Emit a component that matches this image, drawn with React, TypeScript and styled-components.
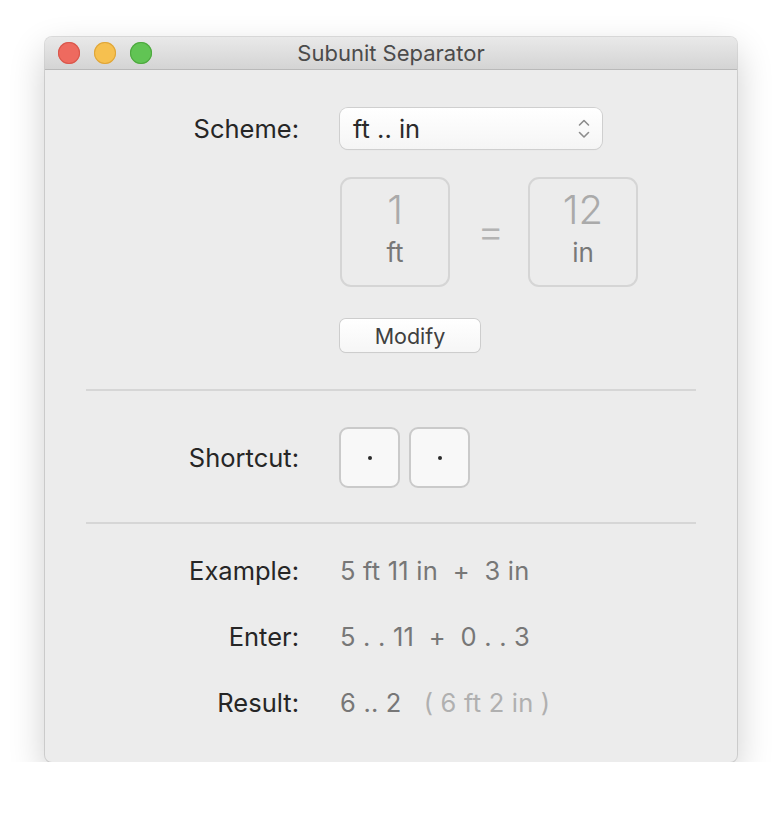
import React from 'react'
import styled, { createGlobalStyle } from 'styled-components'

const GlobalStyle = createGlobalStyle`
  html, body {
    margin: 0;
    padding: 0;
    background: #ffffff;
  }

  body {
    font-family: Inter, 'Noto Sans', 'Liberation Sans', sans-serif;
    -webkit-font-smoothing: antialiased;
  }
`

const Window = styled.div`
  width: 692px;
  margin: 37px 0 0 45px;
  border-radius: 7px;
  overflow: hidden;
  background: #ececec;
  box-shadow: 0 0 0 1px rgba(0, 0, 0, 0.12), 0 14px 36px rgba(0, 0, 0, 0.2);
`

const TitleBar = styled.div`
  position: relative;
  height: 32px;
  display: flex;
  align-items: center;
  justify-content: center;
  background: linear-gradient(#e9e9e9, #d4d4d4);
  border-bottom: 1px solid #b9b9b9;

  h1 {
    margin: 0;
    font-size: 22px;
    font-weight: 400;
    line-height: 28px;
    color: #4b4b4b;
  }
`

const Lights = styled.div`
  position: absolute;
  left: 13px;
  top: 5px;
  display: flex;
  gap: 14px;
`

const Light = styled.span<{ $fill: string; $edge: string }>`
  width: 22px;
  height: 22px;
  border-radius: 50%;
  background: ${p => p.$fill};
  box-shadow: inset 0 0 0 1px ${p => p.$edge};
`

const Content = styled.div`
  padding: 38px 41px 44px;
`

const Row = styled.div<{ $top?: number }>`
  display: grid;
  grid-template-columns: 213px 1fr;
  column-gap: 41px;
  align-items: center;
  margin-top: ${p => p.$top ?? 0}px;
`

const Label = styled.span`
  text-align: right;
  font-size: 25.5px;
  line-height: 30px;
  color: #262626;
`

const Popup = styled.div`
  width: 262px;
  height: 41px;
  box-sizing: border-box;
  padding: 0 12px 0 13px;
  display: flex;
  align-items: center;
  justify-content: space-between;
  border-radius: 8px;
  background: linear-gradient(#ffffff, #f5f5f5);
  box-shadow: 0 0 0 1px #cfcfcf, 0 1px 1px rgba(0, 0, 0, 0.12);
  font-size: 25.5px;
  color: #2b2b2b;
`

const Ratio = styled.div`
  display: flex;
  align-items: center;
  gap: 27px;
`

const UnitBox = styled.div`
  width: 110px;
  height: 110px;
  box-sizing: border-box;
  border: 2px solid #d5d5d5;
  border-radius: 11px;
  display: flex;
  flex-direction: column;
  align-items: center;
  justify-content: center;
  padding-bottom: 6px;

  strong {
    font-size: 40px;
    font-weight: 300;
    line-height: 42px;
    color: #aaaaaa;
  }

  span {
    margin-top: 6px;
    font-size: 26px;
    line-height: 32px;
    color: #787878;
  }
`

const Equals = styled.span`
  font-size: 42px;
  font-weight: 300;
  color: #b3b3b3;
  width: 24px;
  text-align: center;
  margin-top: -4px;
`

const Button = styled.button`
  width: 140px;
  height: 33px;
  padding: 0;
  border: none;
  border-radius: 6px;
  background: linear-gradient(#ffffff, #f6f6f6);
  box-shadow: 0 0 0 1px #cdcdcd, 0 1px 1px rgba(0, 0, 0, 0.1);
  font-family: inherit;
  font-size: 21.5px;
  color: #404040;
`

const Separator = styled.hr<{ $top: number }>`
  margin: ${p => p.$top}px 0 0;
  border: none;
  height: 2px;
  background: #d6d6d6;
`

const Keys = styled.div`
  display: flex;
  gap: 9px;
  margin-left: -1px;
`

const Key = styled.div`
  width: 61px;
  height: 61px;
  box-sizing: border-box;
  border: 2px solid #cacaca;
  border-radius: 9px;
  background: #f8f8f8;
  display: flex;
  align-items: center;
  justify-content: center;

  &::after {
    content: '';
    width: 4px;
    height: 4px;
    border-radius: 50%;
    background: #2a2a2a;
  }
`

const Value = styled.span`
  font-size: 25.5px;
  line-height: 30px;
  color: #777777;
  white-space: pre;
  letter-spacing: 0.2px;

  em {
    font-style: normal;
    color: #b0b0b0;
  }
`

function Chevrons() {
  return (
    <svg width='12' height='22' viewBox='0 0 12 22'>
      <path
        d='M1.5 7 L6 2.5 L10.5 7 M1.5 14.5 L6 19 L10.5 14.5'
        fill='none'
        stroke='#8c8c8c'
        strokeWidth='1.6'
        strokeLinecap='round'
        strokeLinejoin='round'
      />
    </svg>
  )
}

export default function App(): JSX.Element {
  return (
    <>
      <GlobalStyle />
      <Window>
        <TitleBar>
          <Lights>
            <Light $fill='#ee6a5f' $edge='#d8574c' />
            <Light $fill='#f6c04f' $edge='#dea53a' />
            <Light $fill='#61c454' $edge='#4ea83f' />
          </Lights>
          <h1>Subunit Separator</h1>
        </TitleBar>

        <Content>
          <Row>
            <Label>Scheme:</Label>
            <Popup>
              <span>ft .. in</span>
              <Chevrons />
            </Popup>
          </Row>

          <Row $top={28}>
            <span />
            <Ratio>
              <UnitBox>
                <strong>1</strong>
                <span>ft</span>
              </UnitBox>
              <Equals>=</Equals>
              <UnitBox>
                <strong>12</strong>
                <span>in</span>
              </UnitBox>
            </Ratio>
          </Row>

          <Row $top={32}>
            <span />
            <div>
              <Button>Modify</Button>
            </div>
          </Row>

          <Separator $top={37} />

          <Row $top={36}>
            <Label>Shortcut:</Label>
            <Keys>
              <Key />
              <Key />
            </Keys>
          </Row>

          <Separator $top={34} />

          <Row $top={32}>
            <Label>Example:</Label>
            <Value>5 ft 11 in  +  3 in</Value>
          </Row>
          <Row $top={36}>
            <Label>Enter:</Label>
            <Value>5 . . 11  +  0 . . 3</Value>
          </Row>
          <Row $top={36}>
            <Label>Result:</Label>
            <Value>
              6 .. 2   <em>( 6 ft 2 in )</em>
            </Value>
          </Row>
        </Content>
      </Window>
    </>
  )
}
